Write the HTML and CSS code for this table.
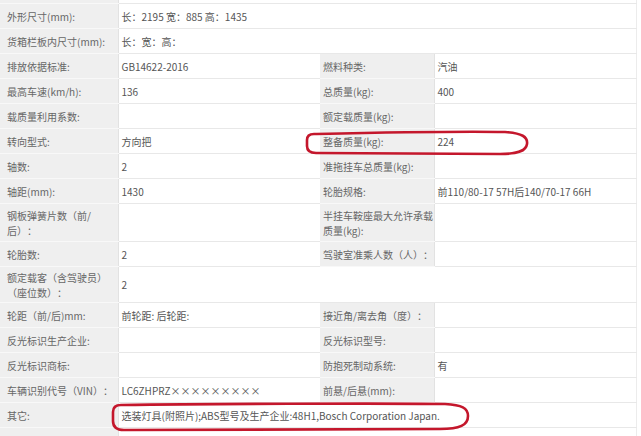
FILE: index.html
```html
<!DOCTYPE html>
<html lang="zh-CN">
<head>
<meta charset="utf-8">
<title>车辆参数</title>
<link rel="stylesheet" href="styles.css">
</head>
<body>
<div class="page">
<table class="spec">
<colgroup><col class="c-l"><col class="c-v"><col class="c-l2"><col class="c-v2"></colgroup>
<tr class="stub"><td class="lab"></td><td class="val" colspan="3"></td></tr>
<tr><td class="lab">外形尺寸(mm):</td><td class="val" colspan="3">长：2195 宽：885 高：1435</td></tr>
<tr><td class="lab">货箱栏板内尺寸(mm):</td><td class="val" colspan="3">长：宽：高：</td></tr>
<tr><td class="lab">排放依据标准:</td><td class="val">GB14622-2016</td><td class="lab lab2">燃料种类:</td><td class="val">汽油</td></tr>
<tr><td class="lab">最高车速(km/h):</td><td class="val">136</td><td class="lab lab2">总质量(kg):</td><td class="val">400</td></tr>
<tr><td class="lab">载质量利用系数:</td><td class="val"></td><td class="lab lab2">额定载质量(kg):</td><td class="val"></td></tr>
<tr><td class="lab">转向型式:</td><td class="val">方向把</td><td class="lab lab2">整备质量(kg):</td><td class="val">224</td></tr>
<tr><td class="lab">轴数:</td><td class="val">2</td><td class="lab lab2">准拖挂车总质量(kg):</td><td class="val"></td></tr>
<tr><td class="lab">轴距(mm):</td><td class="val">1430</td><td class="lab lab2">轮胎规格:</td><td class="val">前110/80-17 57H后140/70-17 66H</td></tr>
<tr class="tall"><td class="lab">钢板弹簧片数（前/后）：</td><td class="val"></td><td class="lab lab2">半挂车鞍座最大允许承载质量(kg):</td><td class="val"></td></tr>
<tr><td class="lab">轮胎数:</td><td class="val">2</td><td class="lab lab2">驾驶室准乘人数（人）：</td><td class="val"></td></tr>
<tr class="tall2"><td class="lab">额定载客（含驾驶员）（座位数）：</td><td class="val" colspan="3">2</td></tr>
<tr><td class="lab">轮距（前/后)mm:</td><td class="val">前轮距: 后轮距:</td><td class="lab lab2">接近角/离去角（度）：</td><td class="val"></td></tr>
<tr><td class="lab">反光标识生产企业:</td><td class="val"></td><td class="lab lab2">反光标识型号:</td><td class="val"></td></tr>
<tr><td class="lab">反光标识商标:</td><td class="val"></td><td class="lab lab2">防抱死制动系统:</td><td class="val">有</td></tr>
<tr><td class="lab">车辆识别代号（VIN）：</td><td class="val">LC6ZHPRZ×××××××××</td><td class="lab lab2">前悬/后悬(mm):</td><td class="val"></td></tr>
<tr><td class="lab">其它:</td><td class="val" colspan="3">选装灯具(附照片);ABS型号及生产企业:48H1,Bosch Corporation Japan.</td></tr>
<tr class="tail"><td class="lab"></td><td class="val" colspan="3"></td></tr>
</table>
<svg class="marks" width="641" height="436" viewBox="0 0 641 436" aria-hidden="true">
<path d="M314 134 C360 133 450 131 505 132 C522 133 528 137 527 144 C526 151 518 154 500 154 L316 153 C309 153 307 150 307 146 L307 140 C307 136 309 134 314 134 Z"/>
<path d="M121 405 C200 404 380 403 445 404 C462 405 468 408 468 416 C468 425 460 429 440 429 L124 430 C116 430 113 427 113 421 L113 412 C113 407 116 405 121 405 Z"/>
</svg>
</div>
</body>
</html>
```
FILE: styles.css
```css
html, body {
  margin: 0;
  padding: 0;
  background: #ffffff;
}
.page {
  position: relative;
  width: 641px;
  height: 436px;
  overflow: hidden;
}
.spec {
  border-collapse: collapse;
  table-layout: fixed;
  width: 636px;
  font-family: "Noto Sans CJK SC", "Liberation Sans", sans-serif;
  font-size: 10px;
  color: #555555;
  border-right: 1px solid #ececec;
  text-spacing-trim: space-all;
}
.c-l { width: 118px; }
.c-v { width: 202px; }
.c-l2 { width: 114px; }
.c-v2 { width: 202px; }
.spec td {
  height: 24px;
  padding: 0 0 0 7px;
  vertical-align: middle;
  line-height: 15px;
}
.spec .lab {
  background: #efefef;
  color: #666666;
  border-bottom: 1px solid #f8f8f8;
}
.spec .lab2 {
  padding-left: 3px;
}
.spec .val {
  background: #ffffff;
  color: #555555;
  border-bottom: 1px solid #e8e8e8;
  border-left: 1px solid #e2e2e2;
  padding-left: 3px;
}
.spec tr.stub td { height: 3px; }
.spec tr.tall td { height: 37px; }
.spec tr.tall2 td { height: 35px; }
.spec tr.tail td { height: 24px; }
.marks {
  position: absolute;
  left: 0;
  top: 0;
  pointer-events: none;
}
.marks path {
  fill: none;
  stroke: #c4172c;
  stroke-width: 2.6;
  stroke-linejoin: round;
}
```
